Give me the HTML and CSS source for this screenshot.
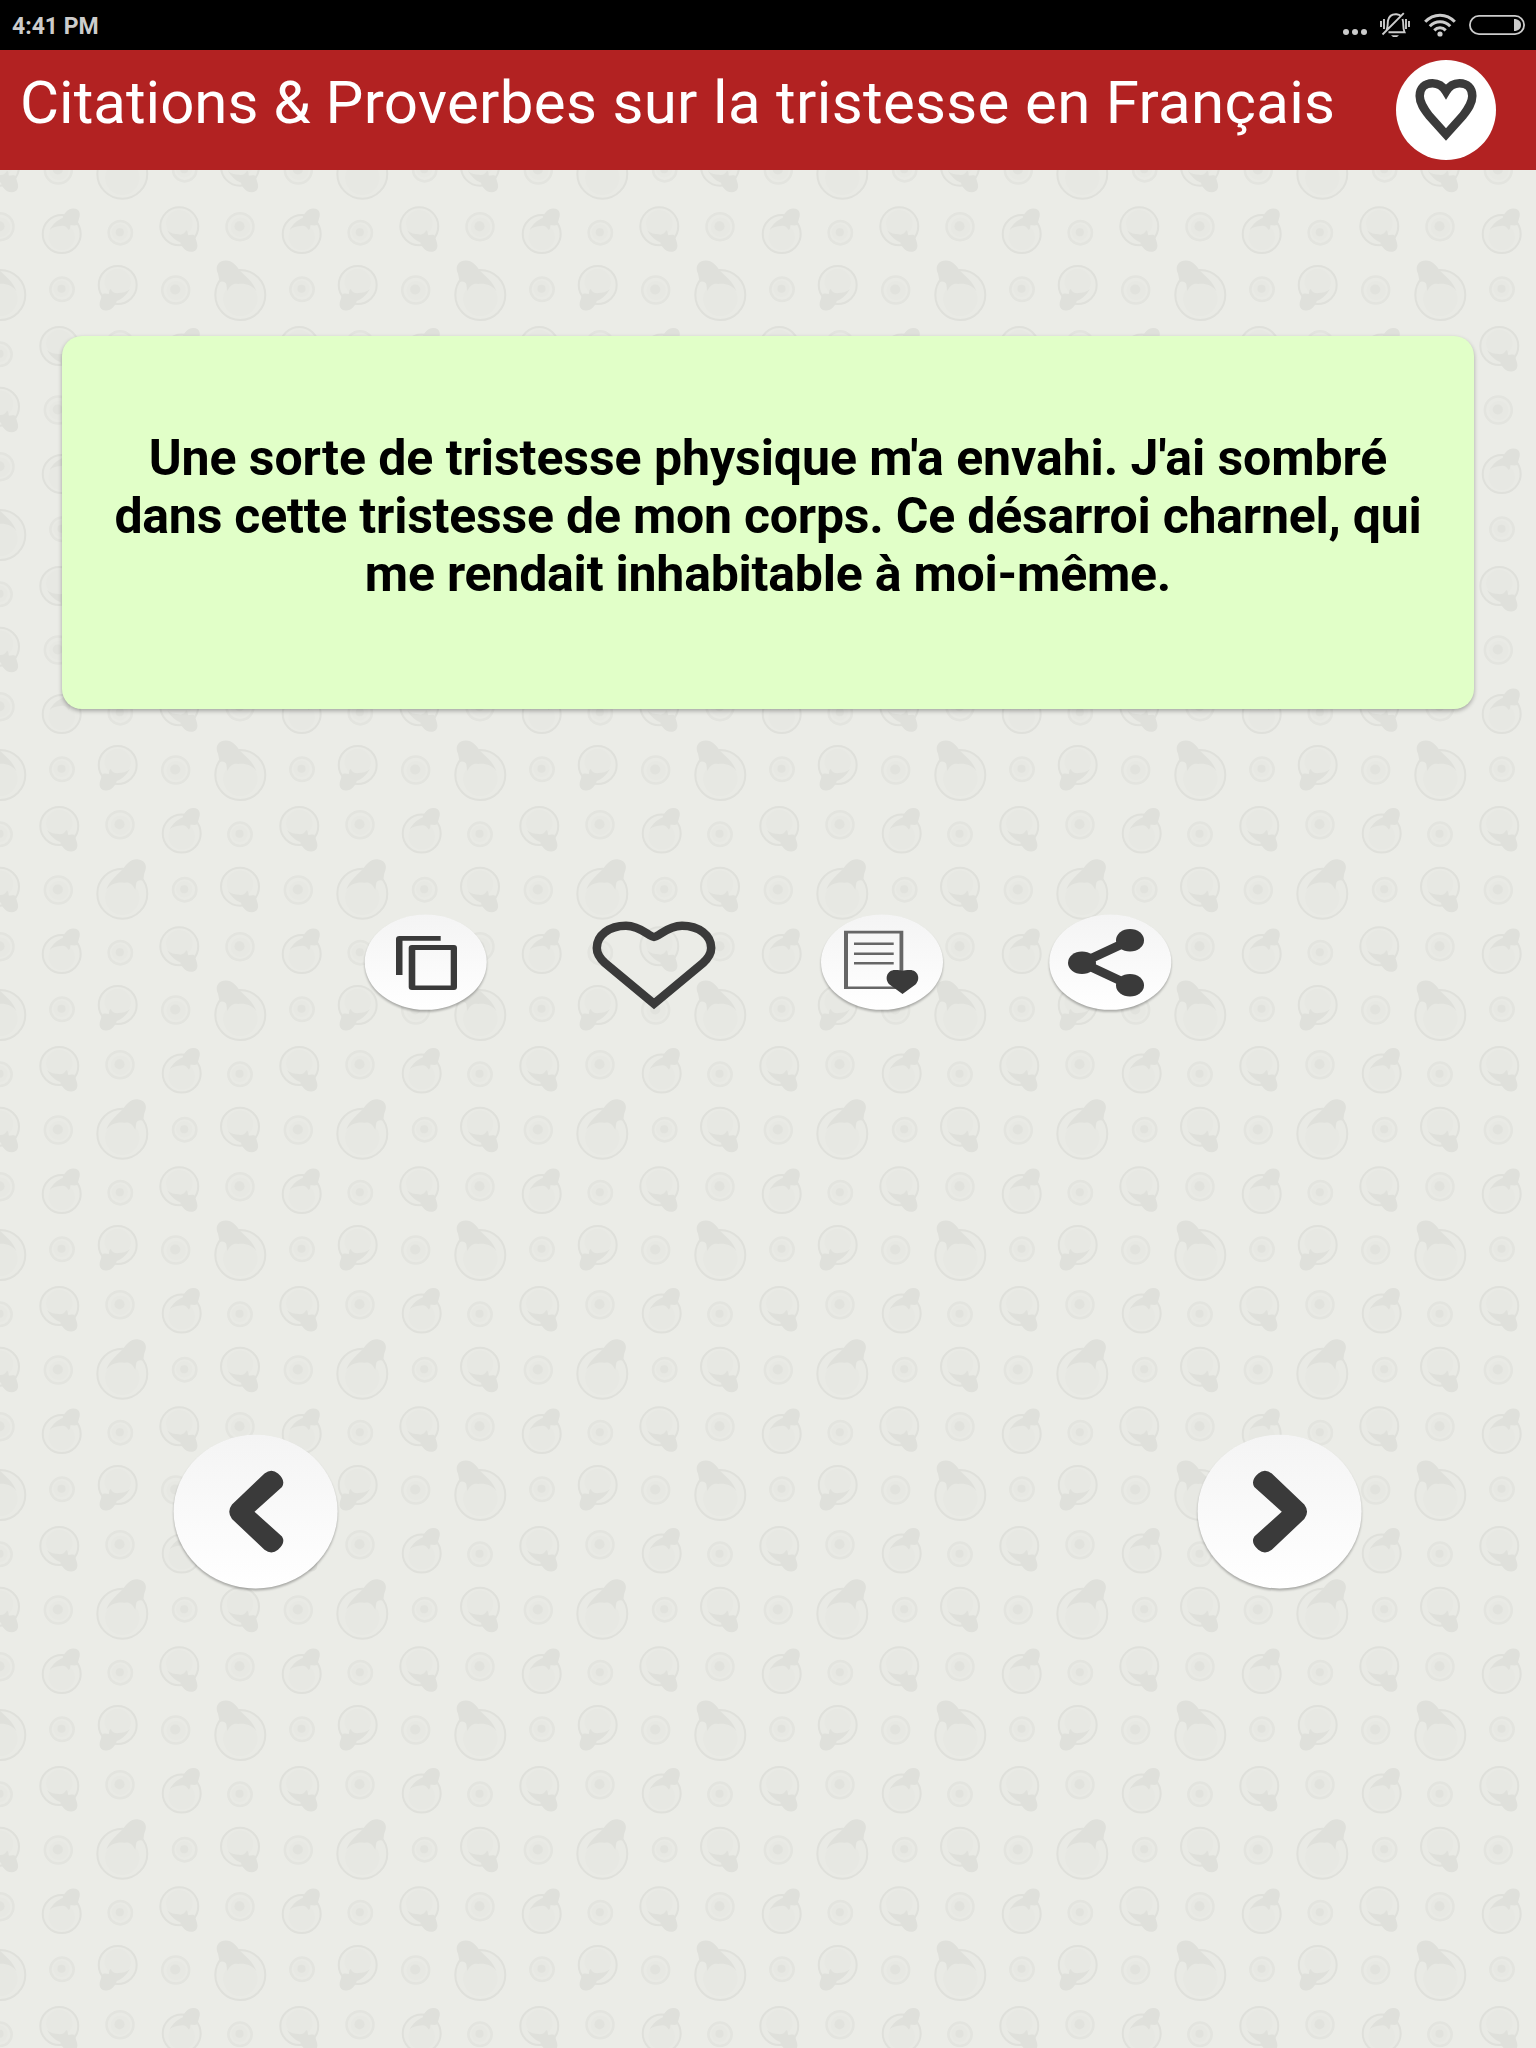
FILE: index.html
```html
<!DOCTYPE html>
<html lang="fr">
<head>
    <meta charset="UTF-8">
    <meta name="viewport" content="width=device-width, initial-scale=1.0">
    <title>Citations &amp; Proverbes</title>
    <link rel="stylesheet" href="styles.css">
</head>
<body>
    <!-- Background pattern -->
    <svg class="wallpaper" aria-hidden="true">
        <defs>
            <g id="dot">
                <circle r="11.7" class="rim"/>
                <circle cx="-0.5" cy="-0.5" r="8" class="core"/>
                <circle cx="-0.5" cy="-0.5" r="4" class="center"/>
            </g>
            <g id="dotLarge">
                <circle r="13.5" class="rim"/>
                <circle cx="0.5" cy="0.5" r="9.5" class="core"/>
                <circle cx="-0.5" cy="-0.5" r="5" class="center"/>
            </g>
            <!-- face with the hat pointing up right -->
            <g id="face">
                <circle r="19" class="ring"/>
                <circle cy="3" r="13" class="core"/>
                <path class="hat" d="M-12 -4 C-9 -10 -4 -14 1 -16 C2 -21 7 -26 12 -25.5 C18 -25.5 19 -20 17.5 -16 C16.5 -13 16.5 -11 15 -9 C12 -8 11 -9 9 -9 C8 -7 9 -5 7 -4 C5 -8 2 -9 -1 -8 C-5 -8 -9 -7 -12 -4Z"/>
            </g>
            <g id="faceLarge">
                <circle r="25" class="ring"/>
                <circle cy="4" r="17" class="core"/>
                <path class="hat" d="M-16 -4 C-13 -13 -5 -19 1 -25 C4 -30 9 -35 15 -34.5 C22 -34 25 -29 23 -23 C21 -19 22 -15 20 -13 C17 -14 15 -13 14 -11 L13 -4 C10 -10 7 -12 2 -11 C-5 -12 -12 -10 -16 -4Z"/>
            </g>
            <g id="tile">
                <use href="#faceLarge" transform="translate(0.3 55) scale(-1 1)"/>
                <use href="#dot" x="62" y="49.3"/>
                <use href="#face" transform="translate(117.7 45) scale(-1 -1)"/>
                <use href="#dotLarge" x="175.7" y="50"/>
                <use href="#dot" x="0" y="114.3"/>
                <use href="#face" transform="translate(59.3 106) scale(1 -1)"/>
                <use href="#dotLarge" x="120" y="104.7"/>
                <use href="#face" x="181.7" y="113.5"/>
                <use href="#face" transform="translate(0 166.7) scale(1 -1)"/>
                <use href="#dotLarge" x="58.3" y="170"/>
                <use href="#faceLarge" x="122.3" y="173.7"/>
                <use href="#dot" x="184.7" y="169.7"/>
                <use href="#dotLarge" x="0" y="226.7"/>
                <use href="#face" x="61.7" y="234"/>
                <use href="#dot" x="120.3" y="232.7"/>
                <use href="#face" transform="translate(179.3 226.3) scale(1 -1)"/>
            </g>
            <pattern id="faces" width="240" height="240" patternUnits="userSpaceOnUse">
                <use href="#tile"/>
                <use href="#tile" x="240"/>
                <use href="#tile" y="-240"/>
                <use href="#tile" x="240" y="-240"/>
            </pattern>
            <linearGradient id="button" x1="0" y1="0" x2="0" y2="1">
                <stop offset="0" stop-color="#f4f4f4"/>
                <stop offset="1" stop-color="#ffffff"/>
            </linearGradient>
        </defs>
        <rect width="100%" height="100%" fill="url(#faces)"/>
    </svg>

    <div class="status-bar">
        <span class="time">4:41 PM</span>
        <div class="status-icons">
            <svg class="dots" width="24" height="24" viewBox="0 0 24 24">
                <circle cx="3" cy="19" r="3"/>
                <circle cx="12" cy="19" r="3"/>
                <circle cx="21" cy="19" r="3"/>
            </svg>
            <svg class="bell" width="30" height="26" viewBox="0 0 30 26">
                <path d="M6.5 18.5 C8 15 7.5 12 8 8.5 C9 3.5 13 2 16.5 2.2 C18.5 2.4 20 3 21 4.2 M22.5 7 C24 11 22.5 16 24.5 20.2 H8.5 M23.8 1.2 L2.5 22.5 M1 9 V15 M4 7 V17 M26 7 V17 M29 9 V15"/>
                <path d="M11 23.2 H19 L17 25 H13Z" class="clapper"/>
            </svg>
            <svg class="wifi" width="32" height="24" viewBox="0 0 32 24">
                <path d="M1.2 8.8 C9.5 0 22.5 0 30.8 8.8 M5.8 13.2 C11.5 7.2 20.5 7.2 26.2 13.2 M10.3 17.4 C13.5 14 18.5 14 21.7 17.4"/>
                <circle cx="16" cy="21" r="2.6"/>
            </svg>
            <svg class="battery" width="56" height="20" viewBox="0 0 56 20">
                <rect x="0.9" y="0.9" width="54.2" height="18.2" rx="9.1"/>
                <path d="M45 4 C49.5 4 52 6.5 52 10 C52 13.5 49.5 16 45 16Z"/>
            </svg>
        </div>
    </div>

    <header class="toolbar">
        <h1>Citations &amp; <span>Proverbes sur la tristesse en Français</span></h1>
        <button class="favorites" aria-label="Favoris">
            <svg width="100" height="100" viewBox="0 0 100 100">
                <circle cx="50" cy="50" r="50" fill="#fff"/>
                <path class="outline" d="M50 74.5 L33 55.5 C28 49 23.7 43 23.7 36 C23.7 28 29 23.3 36.5 23.3 C43 23.3 47 26.5 50 31.5 C53 26.5 57 23.3 63.5 23.3 C71 23.3 76.3 28 76.3 36 C76.3 43 72 49 67 55.5Z"/>
            </svg>
        </button>
    </header>

    <main>
        <div class="card">
            <p><span class="first-line">Une sorte de tristesse physique m'a envahi. J'ai sombré</span><br>dans cette tristesse de mon corps. Ce désarroi charnel, qui<br>me rendait inhabitable à moi-même.</p>
        </div>

        <div class="actions">
            <button aria-label="Copier">
                <svg class="raised" width="128" height="104" viewBox="0 0 128 104">
                    <ellipse cx="63.7" cy="52.2" rx="61" ry="47.6" fill="url(#button)"/>
                    <path d="M78.7 25.9 V30.7 H40.5 V65 H34 V29 Q34 25.9 37.5 25.9Z"/>
                    <path fill-rule="evenodd" d="M50 35 H92 Q95 35 95 38 V77 Q95 80 92 80 H50 Q46.7 80 46.7 77 V38 Q46.7 35 50 35Z M53.3 40 V75.5 H88.7 V40Z"/>
                </svg>
            </button>
            <button aria-label="Ajouter aux favoris">
                <svg width="128" height="104" viewBox="0 0 128 104">
                    <path class="outline" stroke-linejoin="miter" d="M64 93.8 L15 53 C9.5 48 6.8 43.5 6.8 38 C6.8 25.5 19 15.8 36 15.8 C51 15.8 59 27 64 27 C69 27 77 15.8 92 15.8 C109 15.8 121.2 25.5 121.2 38 C121.2 43.5 118.5 48 113 53Z"/>
                </svg>
            </button>
            <button aria-label="Liste des favoris">
                <svg class="raised" width="128" height="104" viewBox="0 0 128 104">
                    <ellipse cx="64" cy="52.2" rx="61" ry="47.6" fill="url(#button)"/>
                    <path class="sheet" fill-rule="evenodd" d="M26 20.7 H85.3 V79 H26Z M30 23.5 V76.5 H81.5 V23.5Z"/>
                    <path class="sheet" d="M36 32.5 H75.7 V35 H36Z M36 42.4 H75.7 V44.9 H36Z M36 52.1 H75.7 V54.6 H36Z"/>
                    <path d="M84.5 84 L71.5 74.5 C66 69 69 60 77 60 C81 60 83 60.5 84.5 60.7 C86 60.5 88 60 92 60 C100 60 103 69 97.5 74.5Z"/>
                </svg>
            </button>
            <button aria-label="Partager">
                <svg class="raised" width="128" height="104" viewBox="0 0 128 104">
                    <ellipse cx="64.3" cy="52.2" rx="61" ry="47.6" fill="url(#button)"/>
                    <path class="links" d="M84 30.3 L36 52.7 L84 75.3"/>
                    <ellipse cx="36" cy="52.7" rx="14" ry="11.3"/>
                    <ellipse cx="84" cy="30.3" rx="14" ry="11.3"/>
                    <ellipse cx="84" cy="75.3" rx="14" ry="11.3"/>
                </svg>
            </button>
        </div>

        <div class="pager">
            <button aria-label="Précédent">
                <svg class="raised" width="168" height="168" viewBox="0 0 168 168">
                    <ellipse cx="83.6" cy="81.6" rx="82" ry="76.8" fill="url(#button)"/>
                    <path class="chevron" d="M92.5 43.5 Q99.5 38 106 43.5 Q114 50.5 110 57 L82.5 81.7 L110 106.5 Q114 113 106 119.8 Q99.5 125 92.5 119.8 L60 89 Q54.5 81.7 60 74.5Z"/>
                </svg>
            </button>
            <button aria-label="Suivant">
                <svg class="raised" width="168" height="168" viewBox="0 0 168 168">
                    <ellipse cx="83.6" cy="81.6" rx="82" ry="76.8" fill="url(#button)"/>
                    <path class="chevron" transform="translate(168.3 0) scale(-1 1)" d="M92.5 43.5 Q99.5 38 106 43.5 Q114 50.5 110 57 L82.5 81.7 L110 106.5 Q114 113 106 119.8 Q99.5 125 92.5 119.8 L60 89 Q54.5 81.7 60 74.5Z"/>
                </svg>
            </button>
        </div>
    </main>
</body>
</html>
```
FILE: styles.css
```css
* {
    box-sizing: border-box;
}

body {
    margin: 0;
    min-height: 2048px;
    font-family: Roboto, "Liberation Sans", sans-serif;
    background-color: #ebece7;
    overflow: hidden;
}

svg {
    display: block;
}

button {
    padding: 0;
    border: none;
    background: none;
    cursor: pointer;
}

button svg {
    fill: #3a3a3a;
}

/* Background */
.wallpaper {
    position: absolute;
    top: 0;
    left: 0;
    z-index: -1;
    width: 100%;
    height: 2048px;
}

.ring {
    fill: #e9eae5;
    stroke: #dfe0db;
    stroke-width: 2;
}

.rim {
    fill: #e9eae5;
    stroke: #e3e4df;
    stroke-width: 2.5;
}

.core {
    fill: #e7e8e3;
}

.center {
    fill: #e1e2dd;
}

.hat {
    fill: #dfe0db;
}

/* Status bar */
.status-bar {
    display: flex;
    justify-content: space-between;
    align-items: center;
    height: 50px;
    padding: 0 11px 0 12px;
    background-color: #000;
    color: #ccc;
}

.time {
    font-size: 23px;
    font-weight: bold;
    line-height: 28px;
    padding-top: 3px;
}

.status-icons {
    display: flex;
    align-items: center;
    fill: #ccc;
}

.bell {
    margin-left: 13px;
    fill: none;
    stroke: #ccc;
    stroke-width: 1.9;
}

.bell .clapper {
    fill: #ccc;
    stroke: none;
}

.wifi {
    margin-left: 14px;
}

.wifi path {
    fill: none;
    stroke: #ccc;
    stroke-width: 3;
}

.battery {
    margin-left: 13px;
}

.battery rect {
    fill: none;
    stroke: #ccc;
    stroke-width: 1.8;
}

/* Toolbar */
.toolbar {
    display: flex;
    justify-content: space-between;
    align-items: center;
    height: 120px;
    padding: 0 40px 0 20px;
    background-color: #b22222;
}

.toolbar h1 {
    margin: 0 0 14px;
    color: #fff;
    font-size: 60px;
    font-weight: normal;
    line-height: 70px;
    white-space: nowrap;
}

.toolbar h1 span {
    letter-spacing: 0.33px;
}

.outline {
    fill: none;
    stroke: #3a3a3a;
    stroke-width: 8.5;
}

/* Quote */
.card {
    display: flex;
    justify-content: center;
    height: 373px;
    margin: 166px 62px 0;
    padding-top: 93px;
    border-radius: 20px;
    background-color: #e1ffc8;
    box-shadow: 0 2px 4px rgba(0, 0, 0, 0.3);
}

.card p {
    margin: 0;
    color: #000;
    font-size: 50px;
    font-weight: bold;
    line-height: 58px;
    letter-spacing: -0.22px;
    text-align: center;
    white-space: nowrap;
}

.card .first-line {
    letter-spacing: -0.06px;
}

/* Buttons */
.actions {
    display: flex;
    justify-content: center;
    gap: 100px;
    margin-top: 201px;
}

.raised {
    filter: drop-shadow(0 2px 1px rgba(0, 0, 0, 0.28));
}

.sheet {
    fill: #666;
}

.links {
    fill: none;
    stroke: #3a3a3a;
    stroke-width: 9;
}

.pager {
    display: flex;
    justify-content: space-between;
    margin-top: 416px;
    padding: 0 172px;
}

.chevron {
    fill: #3a3a3a;
}
```
